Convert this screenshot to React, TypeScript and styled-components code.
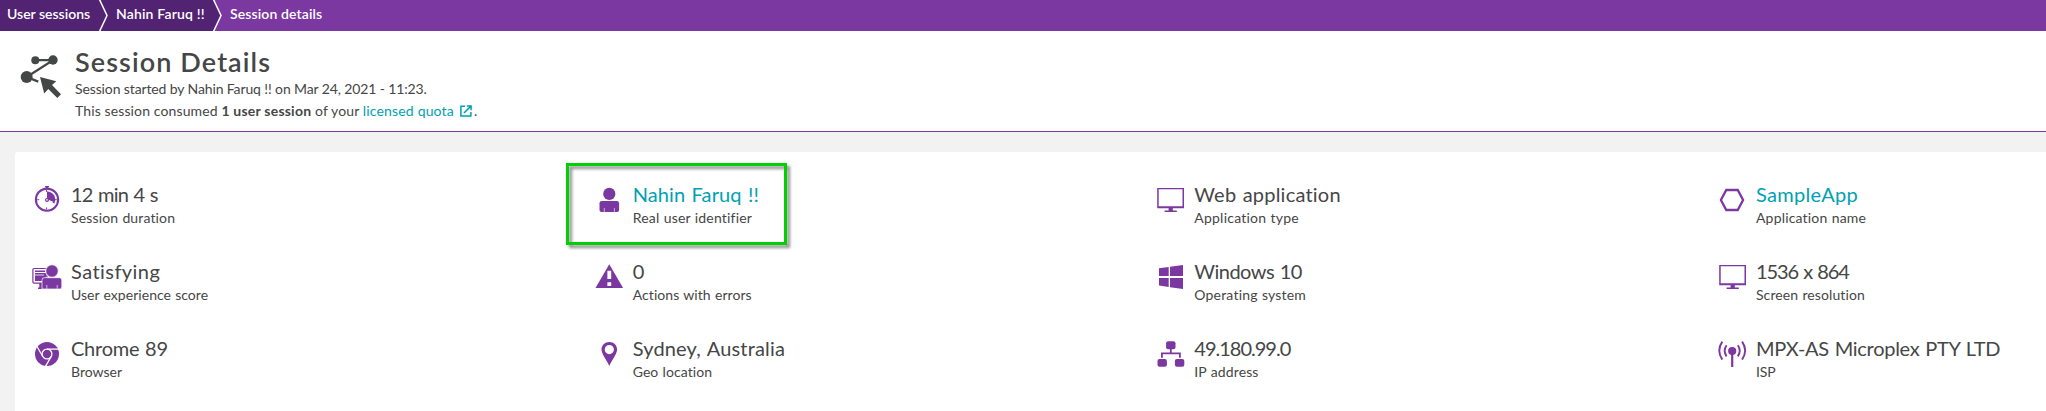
import React from 'react';
import styled, { createGlobalStyle } from 'styled-components';

const purple = '#7c38a1';
const darkPurple = '#522273';
const ink = '#454646';
const teal = '#00a1b2';

const GlobalStyle = createGlobalStyle`
  * { box-sizing: border-box; }
  body {
    margin: 0;
    background: #f2f2f2;
    color: ${ink};
    font-family: Lato, "Liberation Sans", sans-serif;
    font-size: 14px;
    overflow: hidden;
  }
`;

const Page = styled.div`
  height: 411px;
  display: flex;
  flex-direction: column;
  overflow: hidden;
`;

const Breadcrumbs = styled.nav`
  height: 31px;
  flex: none;
  display: flex;
  background: ${purple};
`;

const Crumb = styled.a<{ $width: number; $pad: number; $track?: number; $current?: boolean }>`
  width: ${p => p.$width}px;
  padding-left: ${p => p.$pad}px;
  background: ${p => (p.$current ? purple : darkPurple)};
  color: #fff;
  font-weight: 600;
  line-height: 28px;
  letter-spacing: ${p => p.$track ?? 0}px;
  white-space: nowrap;
`;

const ChevronSvg = styled.svg`
  width: 9px;
  height: 31px;
  flex: none;
  display: block;
`;

const Header = styled.header`
  height: 101px;
  flex: none;
  display: flex;
  padding: 15px 0 0 16px;
  background: #fff;
  border-bottom: 1px solid ${purple};
`;

const HeaderIcon = styled.svg`
  width: 48px;
  height: 56px;
  flex: none;
  margin: 1px 11px 0 0;
`;

const Title = styled.h1`
  margin: 0;
  font-size: 27px;
  line-height: 32px;
  font-weight: 600;
  letter-spacing: 1.1px;
`;

const Line = styled.p<{ $track?: number }>`
  margin: 0;
  line-height: 22px;
  letter-spacing: ${p => p.$track ?? 0}px;
  white-space: nowrap;
`;

const Quantity = styled.b`
  letter-spacing: 0.22px;
`;

const QuotaLink = styled.a`
  color: ${teal};
  letter-spacing: 0.17px;

  svg {
    width: 12px;
    height: 12px;
    margin: 0 2px 0 6px;
    vertical-align: -1px;
  }
`;

const Card = styled.main`
  flex: 1;
  margin: 20px 0 0 15px;
  padding: 30px 0 0 17px;
  border-radius: 3px 0 0 0;
  background: #fff;
  display: grid;
  grid-template-columns: repeat(3, 561.67px) 1fr;
  grid-auto-rows: 47px;
  row-gap: 30px;
`;

const Cell = styled.div`
  position: relative;
  display: flex;
`;

const CellIcon = styled.svg`
  width: 30px;
  height: 30px;
  flex: none;
  margin: 3px 9px 0 0;
  fill: ${purple};
`;

const Value = styled.div<{ $track: number; $link?: boolean }>`
  font-size: 20px;
  line-height: 24px;
  letter-spacing: ${p => p.$track}px;
  word-spacing: 1px;
  color: ${p => (p.$link ? teal : ink)};
  white-space: nowrap;
`;

const Label = styled.div<{ $track: number }>`
  line-height: 23px;
  letter-spacing: ${p => p.$track}px;
  word-spacing: 0.5px;
  white-space: nowrap;
`;

const Highlight = styled.div`
  position: absolute;
  left: -28px;
  top: -19px;
  width: 221px;
  height: 82px;
  border: 3px solid #00d000;
  filter: drop-shadow(3px 3px 1.5px rgba(0, 0, 0, 0.45));
  pointer-events: none;
`;

const Chevron = ({ after }: { after: string }) => (
  <ChevronSvg viewBox="0 0 9 31">
    <path d="M0 0H.5L8 15.5.5 31H0Z" fill={darkPurple} />
    <path d="M.5 0H9V31H.5L8 15.5Z" fill={after} />
    <path d="M.5-.5 8 15.5.5 31.5" fill="none" stroke="#fff" strokeWidth="1.5" />
  </ChevronSvg>
);

const monitor = (
  <>
    <path fillRule="evenodd" d="M2.2 3H29V23.2H2.2ZM3.7 4.3V21.2H27.5V4.3Z" />
    <path d="M13.6 23H17.8V25.4H21.8V27H9.6V25.4H13.6Z" />
  </>
);

const icons: Record<string, React.ReactNode> = {
  clock: (
    <>
      <circle cx="15" cy="14.7" r="11.1" fill="none" stroke={purple} strokeWidth="2.1" />
      <path d="M13 1H17V2.3H16V4H14V2.3H13Z" />
      <path d="M15 14.7V6.4A8.3 8.3 0 0 1 22.4 18.4Z" />
      <path d="M14.6 5V7M14.6 22.5V24.5M5.2 14.7H7.2M22.8 14.7H24.8" stroke={purple} strokeWidth="1" />
      <path d="M15 14.7 21 17.2" stroke="#fff" strokeWidth="1" />
      <circle cx="15" cy="14.9" r="2" />
      <circle cx="15" cy="14.9" r=".8" fill="#fff" />
    </>
  ),
  experience: (
    <>
      <rect x=".9" y="6.5" width="14" height="14.6" rx="1" fill="none" stroke={purple} strokeWidth="1.2" />
      <path d="M3 8.5H13V10H3ZM3 11H14V19H3ZM7.3 21H10V27H6V25.6H7.3Z" />
      <path d="M3 13H12" stroke="#fff" strokeWidth=".8" />
      <circle cx="20" cy="9" r="6.3" stroke="#fff" strokeWidth=".9" />
      <path d="M10 27V18Q10 15.7 12.3 15.7H27.4Q29.8 15.7 29.8 18V24.8Q29.8 27 28 27Z" stroke="#fff" strokeWidth=".7" />
      <path d="M14.8 23V27M25.2 23V27" stroke="#d9c3e3" strokeWidth=".9" />
    </>
  ),
  chrome: (
    <>
      <circle cx="15" cy="15" r="12" />
      <circle cx="15" cy="15" r="4.9" fill="none" stroke="#fff" strokeWidth="1.3" />
      <g stroke="#fff" strokeWidth="1.3">
        <path d="M15 10.1H26.5" />
        <path d="M15 10.1H26.5" transform="rotate(120 15 15)" />
        <path d="M15 10.1H26.5" transform="rotate(240 15 15)" />
      </g>
    </>
  ),
  user: (
    <>
      <circle cx="15.3" cy="8.9" r="6.1" />
      <path d="M5.5 18.3Q5.5 16 7.8 16H22.8Q25.1 16 25.1 18.3V25Q25.1 27 23.1 27H7.5Q5.5 27 5.5 25Z" />
      <path d="M10.3 23V27M20.4 23V27" stroke="#c9a8d8" strokeWidth="1" />
    </>
  ),
  warning: (
    <>
      <path d="M15.3 2.2 29.1 26H1.5Z" />
      <path d="M13.4 8.8H17.2V17H13.4ZM13.4 20.2H17.2V24H13.4Z" fill="#fff" />
    </>
  ),
  pin: (
    <path
      fillRule="evenodd"
      d="M15.3 3C10.8 3 7.5 6.4 7.5 10.6 7.5 14.8 12 20 15.3 27 18.6 20 23.1 14.8 23.1 10.6 23.1 6.4 19.8 3 15.3 3ZM15.3 6A4.6 4.6 0 1 1 15.3 15.2A4.6 4.6 0 1 1 15.3 6Z"
    />
  ),
  monitor,
  windows: <path d="M4 6.3 13.7 5V14.1H4ZM15 4.8 28 3V14.1H15ZM4 15.9H13.7V25L4 23.6ZM15 15.9H28V27L15 25.2Z" />,
  network: (
    <>
      <rect x="11.1" y="2.2" width="9.4" height="8" rx="2" />
      <rect x="2.5" y="20" width="9.4" height="7.8" rx="2" />
      <rect x="19.9" y="20" width="9.4" height="7.8" rx="2" />
      <path d="M15.8 10V14.3M6.9 18.7V14.3H24.9V18.7" fill="none" stroke={purple} strokeWidth="1.8" />
    </>
  ),
  hexagon: <path d="M9.3 5H20.7L26.1 15 20.7 25H9.3L3.9 15Z" fill="none" stroke={purple} strokeWidth="2.3" />,
  antenna: (
    <>
      <circle cx="15.2" cy="12" r="4.1" />
      <path d="M14.1 12H16.3V28H14.1Z" />
      <path
        d="M5.3 2.6Q-.8 11.6 5.3 20.6M25.1 2.6Q31.2 11.6 25.1 20.6M9.6 6.2Q5.7 11.8 9.6 17.4M20.8 6.2Q24.7 11.8 20.8 17.4"
        fill="none"
        stroke={purple}
        strokeWidth="1.9"
      />
    </>
  ),
};

type Fact = {
  icon: string;
  value: string;
  vt: number;
  label: string;
  lt: number;
  link?: boolean;
  marked?: boolean;
};

const facts: Fact[] = [
  { icon: 'clock', value: '12 min 4 s', vt: -0.75, label: 'Session duration', lt: 0.14 },
  { icon: 'user', value: 'Nahin Faruq !!', vt: 0.13, label: 'Real user identifier', lt: 0.19, link: true, marked: true },
  { icon: 'monitor', value: 'Web application', vt: 0.22, label: 'Application type', lt: 0.22 },
  { icon: 'hexagon', value: 'SampleApp', vt: 0.3, label: 'Application name', lt: 0.18, link: true },
  { icon: 'experience', value: 'Satisfying', vt: 0.45, label: 'User experience score', lt: 0.04 },
  { icon: 'warning', value: '0', vt: 0, label: 'Actions with errors', lt: 0.08 },
  { icon: 'windows', value: 'Windows 10', vt: -0.5, label: 'Operating system', lt: 0.19 },
  { icon: 'monitor', value: '1536 x 864', vt: -1.05, label: 'Screen resolution', lt: 0.1 },
  { icon: 'chrome', value: 'Chrome 89', vt: -0.25, label: 'Browser', lt: 0.01 },
  { icon: 'pin', value: 'Sydney, Australia', vt: 0.18, label: 'Geo location', lt: 0.08 },
  { icon: 'network', value: '49.180.99.0', vt: -1, label: 'IP address', lt: 0.12 },
  { icon: 'antenna', value: 'MPX-AS Microplex PTY LTD', vt: -0.29, label: 'ISP', lt: -0.1 },
];

export default function App() {
  return (
    <Page>
      <GlobalStyle />
      <Breadcrumbs>
        <Crumb $width={99} $pad={7}>User sessions</Crumb>
        <Chevron after={darkPurple} />
        <Crumb $width={105} $pad={8} $track={0.18}>Nahin Faruq !!</Crumb>
        <Chevron after={purple} />
        <Crumb $width={120} $pad={8} $track={0.12} $current>Session details</Crumb>
      </Breadcrumbs>
      <Header>
        <HeaderIcon viewBox="16 47 48 56">
          <path d="M35.3 60.2H53L26.7 77 38.3 81.6" fill="none" stroke={ink} strokeWidth="2.3" />
          <circle cx="35.3" cy="60.2" r="4" fill={ink} />
          <circle cx="53" cy="60" r="4.7" fill={ink} />
          <circle cx="26.7" cy="77" r="6" fill={ink} />
          <path d="M40 77 56.3 81.3 52 85 61 94.3 57.3 98 48.3 89 44.2 93.5Z" fill={ink} />
        </HeaderIcon>
        <div>
          <Title>Session Details</Title>
          <Line $track={-0.12}>Session started by Nahin Faruq !! on Mar 24, 2021 - 11:23.</Line>
          <Line $track={0.12}>
            This session consumed <Quantity>1 user session</Quantity>{'  '}of your{' '}
            <QuotaLink>
              licensed quota
              <svg viewBox="0 0 12 12" fill="none" stroke={teal} strokeWidth="1.5">
                <path d="M5 1.2H.9V11.1H10.9V7" />
                <path d="M4 8 10.6 1.4M6.8.9H11.1V5.2" />
              </svg>
            </QuotaLink>
            .
          </Line>
        </div>
      </Header>
      <Card>
        {facts.map(f => (
          <Cell key={f.label}>
            {f.marked && <Highlight />}
            <CellIcon viewBox="0 0 30 30">{icons[f.icon]}</CellIcon>
            <div>
              <Value $track={f.vt} $link={f.link}>{f.value}</Value>
              <Label $track={f.lt}>{f.label}</Label>
            </div>
          </Cell>
        ))}
      </Card>
    </Page>
  );
}
